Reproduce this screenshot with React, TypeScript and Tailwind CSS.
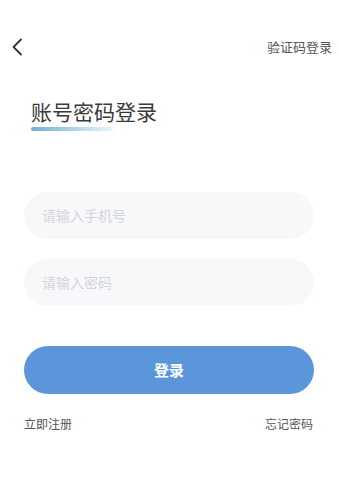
import React from 'react';

const font = { fontFamily: '"Noto Sans CJK SC", "Noto Sans", sans-serif' };

const BackIcon: React.FC = () => (
  <svg width="12" height="18" viewBox="0 0 12 18" fill="none">
    <path d="M10 1.5 L2.5 9 L10 16.5" stroke="#333333" strokeWidth="1.8" strokeLinecap="round" strokeLinejoin="round" />
  </svg>
);

const Field: React.FC<{ placeholder: string; type?: string; className?: string }> = ({ placeholder, type = 'text', className = '' }) => (
  <div className={`h-[47px] w-[290px] rounded-full bg-[#f7f8fa] flex items-center pl-[18px] ${className}`}>
    <input
      type={type}
      placeholder={placeholder}
      className="w-full bg-transparent outline-none text-[14px] text-[#333] placeholder:text-[#d4d5da]"
      style={font}
    />
  </div>
);

export default function App() {
  return (
    <div className="w-[340px] h-[496px] bg-white flex flex-col" style={font}>
      {/* Header */}
      <div className="mt-[35px] h-[22px] flex items-center justify-between pl-[11px] pr-[8px]">
        <div className="mt-[2px]">
          <BackIcon />
        </div>
        <span className="text-[13px] leading-none text-[#555]">验证码登录</span>
      </div>

      {/* Title */}
      <div className="mt-[44px] pl-[31px]">
        <h1 className="text-[21px] leading-[21px] text-[#3a3a3a] font-normal">账号密码登录</h1>
        <div className="mt-[5px] h-[4px] w-[82px] rounded-full bg-gradient-to-r from-[#6fb0d6] to-[#eaf5fa]"></div>
      </div>

      {/* Form */}
      <div className="mt-[61px] pl-[24px] flex flex-col">
        <Field placeholder="请输入手机号" />
        <Field placeholder="请输入密码" type="password" className="mt-[20px]" />
        <button className="mt-[40px] h-[48px] w-[290px] rounded-full bg-[#5b96db] text-white text-[15px] font-bold">
          登录
        </button>
      </div>

      {/* Links */}
      <div className="mt-[22px] flex justify-between pl-[24px] pr-[27px] text-[12px] leading-[16px] text-[#555]">
        <span>立即注册</span>
        <span>忘记密码</span>
      </div>
    </div>
  );
}
